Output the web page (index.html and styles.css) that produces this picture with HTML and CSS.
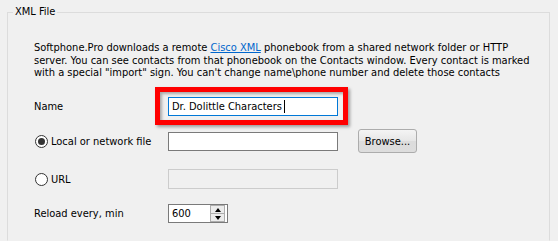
FILE: index.html
```html
<!DOCTYPE html>
<html>
<head>
<meta charset="utf-8">
<link rel="stylesheet" href="styles.css">
</head>
<body>
<div class="page">
  <fieldset class="group">
    <legend class="group-title">XML File</legend>
    <div class="group-body">
      <p class="desc">Softphone.Pro downloads a remote <a class="link" href="#">Cisco XML</a> phonebook from a shared network folder or HTTP<br>server. You can see contacts from that phonebook on the Contacts window. Every contact is marked<br>with a special "import" sign. You can't change name\phone number and delete those contacts</p>

      <div class="row row-name">
        <div class="lbl">Name</div>
        <div class="field">
          <div class="textbox focused"><span class="val">Dr. Dolittle Characters</span><span class="caret"></span></div>
          <span class="highlight"></span>
        </div>
      </div>

      <div class="row row-local">
        <div class="lbl radio-lbl"><span class="radio checked"></span><span>Local or network file</span></div>
        <div class="field">
          <div class="textbox"></div>
          <div class="button">Browse...</div>
        </div>
      </div>

      <div class="row row-url">
        <div class="lbl radio-lbl"><span class="radio"></span><span>URL</span></div>
        <div class="field">
          <div class="textbox disabled"></div>
        </div>
      </div>

      <div class="row row-reload">
        <div class="lbl">Reload every, min</div>
        <div class="field">
          <div class="spin">
            <span class="val">600</span>
            <div class="spin-btns">
              <div class="spin-btn"><span class="arr-up"></span></div>
              <div class="spin-btn"><span class="arr-down"></span></div>
            </div>
          </div>
        </div>
      </div>
    </div>
  </fieldset>
</div>
</body>
</html>
```
FILE: styles.css
```css
html, body {
  margin: 0;
  padding: 0;
  background: #f0f0f0;
  overflow: hidden;
  height: 241px;
}
body {
  font-family: "DejaVu Sans Condensed", "DejaVu Sans", sans-serif;
  font-stretch: condensed;
  font-size: 11px;
  color: #000;
}
.page {
  padding: 5px 8px 0 7px;
  height: 241px;
  box-sizing: border-box;
  overflow: hidden;
}
.group {
  margin: 0;
  padding: 0;
  border: 1px solid #dcdcdc;
  border-bottom-color: transparent;
  height: 236px;
  box-sizing: border-box;
}
.group-title {
  margin-left: 5px;
  padding: 0 2px;
  line-height: 14px;
  height: 14px;
  color: #000;
}
.group-body {
  padding: 23px 0 0 26px;
}
.desc {
  margin: 0;
  line-height: 12.5px;
  white-space: nowrap;
}
.link {
  color: #0066cc;
  text-decoration: underline;
}
.row {
  display: flex;
  align-items: center;
}
.row-name { margin-top: 17.5px; height: 19px; }
.row-local { margin-top: 13px; height: 24px; }
.row-url { margin-top: 16px; height: 20px; }
.row-reload { margin-top: 15px; height: 19px; }

.lbl {
  width: 134px;
  flex: none;
}
.radio-lbl {
  display: flex;
  align-items: center;
}
.radio {
  width: 13px;
  height: 13px;
  box-sizing: border-box;
  border: 1px solid #333;
  border-radius: 50%;
  background: #fff;
  margin-left: 1px;
  margin-right: 3px;
  display: flex;
  align-items: center;
  justify-content: center;
}
.radio.checked::after {
  content: "";
  width: 7px;
  height: 7px;
  border-radius: 50%;
  background: #333;
}
.field {
  position: relative;
  display: flex;
  align-items: center;
}
.textbox {
  width: 170px;
  height: 19px;
  box-sizing: border-box;
  border: 1px solid #7a7a7a;
  background: #fff;
  display: flex;
  align-items: center;
  padding-left: 3px;
}
.row-url .textbox { height: 20px; }
.textbox.focused {
  border-color: #0078d7;
}
.textbox.disabled {
  border-color: #cccccc;
  background: #f0f0f0;
}
.caret {
  width: 1px;
  height: 13px;
  background: #000;
  margin-left: 2px;
}
.highlight {
  position: absolute;
  left: -13px;
  top: -10px;
  width: 193px;
  height: 38px;
  box-sizing: border-box;
  border: 5px solid #ff0000;
  box-shadow: 2px 2px 3px rgba(0,0,0,0.35), inset 2px 2px 3px rgba(0,0,0,0.3);
  pointer-events: none;
}
.button {
  margin-left: 20px;
  width: 59px;
  height: 24px;
  box-sizing: border-box;
  border: 1px solid #acacac;
  border-radius: 3px;
  background: linear-gradient(#f4f4f4, #e6e6e6 50%, #dcdcdc 51%, #dddddd);
  display: flex;
  align-items: center;
  justify-content: center;
}
.spin {
  width: 60px;
  height: 19px;
  box-sizing: border-box;
  border: 1px solid #7a7a7a;
  background: #fff;
  display: flex;
  align-items: center;
  justify-content: space-between;
  padding-left: 3px;
  padding-right: 2px;
}
.spin-btns {
  width: 15px;
  height: 17px;
  display: flex;
  flex-direction: column;
  box-sizing: border-box;
  border: 1px solid #adadad;
  background: #ececec;
}
.spin-btn {
  flex: 1;
  display: flex;
  align-items: center;
  justify-content: center;
}
.spin-btn + .spin-btn {
  border-top: 1px solid #adadad;
}
.arr-up, .arr-down {
  width: 0;
  height: 0;
  border-left: 3.5px solid transparent;
  border-right: 3.5px solid transparent;
}
.arr-up { border-bottom: 4px solid #000; }
.arr-down { border-top: 4px solid #000; }
```
